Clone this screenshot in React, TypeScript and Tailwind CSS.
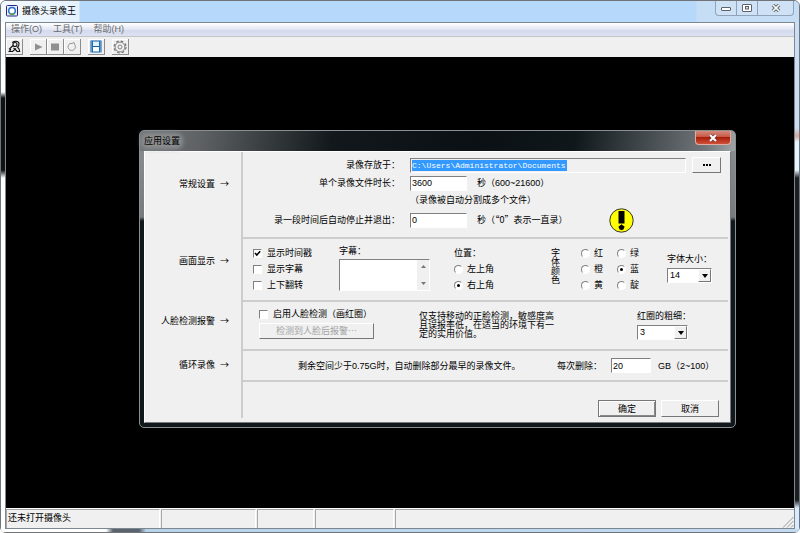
import type { ReactNode } from 'react';
import clsx from 'clsx';

const SUNKEN = 'border border-t-[#808080] border-l-[#808080] border-r-white border-b-white';
const RAISED = 'border border-t-white border-l-white border-r-[#777777] border-b-[#777777] bg-[#f0f0f0]';

const MENUS = ['操作(O)', '工具(T)', '帮助(H)'];

const COLOR_OPTIONS = [
  { label: '红' },
  { label: '绿' },
  { label: '橙' },
  { label: '蓝', checked: true },
  { label: '黄' },
  { label: '靛' },
];

function ToolButton({ label, children }: { label: string; children: ReactNode }) {
  return (
    <button
      type="button"
      aria-label={label}
      className="flex h-4 w-[17px] items-center justify-center border-r border-b border-[#8c8c8c] bg-[#f0f0f0] shadow-[inset_1px_1px_0_#ffffff]"
    >
      {children}
    </button>
  );
}

function Toolbar() {
  return (
    <div className="flex h-5 items-center bg-[#f0f0f0]">
      <ToolButton label="摄像头">
        <svg width="13" height="13" viewBox="0 0 13 13" fill="none" stroke="#111" strokeWidth="1.1">
          <path d="M4.500 3.200C5 .6 10.500.5 11 3.500c.2 1.800-.6 3-1.500 3.800 1.300.8 2 2 2.200 4.200H8.500" />
          <circle cx="7" cy="4.500" r="2" />
          <path d="M5 5.500 1.500 9l1.200.8L1.200 11.500h3.300L8 8.500M5.500 8l3.500 3" />
        </svg>
      </ToolButton>
      <div className="ml-[7px] flex">
        <ToolButton label="播放">
          <svg width="9" height="8" viewBox="0 0 9 8">
            <path d="M1 0.500v7l7.500-3.500z" fill="#8f8f8f" />
          </svg>
        </ToolButton>
        <ToolButton label="停止">
          <svg width="8" height="8" viewBox="0 0 8 8">
            <rect x="0" y="0.500" width="8" height="7" fill="#8f8f8f" />
          </svg>
        </ToolButton>
        <ToolButton label="录像">
          <svg width="10" height="11" viewBox="0 0 10 11" fill="none" stroke="#999" strokeWidth="1">
            <path d="M3 2.500h2.500l.5-1 1.500.5-.3 1A3.700 3.700 0 1 1 3 2.500z" />
          </svg>
        </ToolButton>
      </div>
      <div className="ml-[7px] flex gap-[7px]">
        <ToolButton label="录像文件">
          <svg width="12" height="13" viewBox="0 0 12 13">
            <rect x="0.500" y="0.500" width="11" height="12" fill="#0a5ea8" />
            <rect x="3" y="1.500" width="6" height="4.500" fill="#e2f2ff" />
            <rect x="3" y="7" width="6" height="4.500" fill="#fff" />
            <path d="M1.700 1.500v11M10.300 1.500v11" stroke="#d7ecff" strokeDasharray="1 1" />
          </svg>
        </ToolButton>
        <ToolButton label="设置">
          <svg width="14" height="14" viewBox="0 0 14 14" fill="none" stroke="#777">
            <circle cx="7" cy="7" r="6" strokeWidth="1.200" strokeDasharray="2.700 2.010" />
            <circle cx="7" cy="7" r="4.900" strokeWidth="0.900" />
            <circle cx="7" cy="7" r="2" strokeWidth="0.900" />
          </svg>
        </ToolButton>
      </div>
    </div>
  );
}

function WindowControls() {
  return (
    <div className="flex h-[15px] rounded-b-[4px] border border-t-0 border-[#8fa3ba] bg-[#cfe1f4]">
      <button type="button" aria-label="最小化" className="flex w-[21px] items-center justify-center border-r border-[#8fa3ba]">
        <svg width="10" height="5" viewBox="0 0 10 5">
          <rect x="0.500" y="1.500" width="9" height="3" rx="0.500" fill="#fff" stroke="#5c636e" />
        </svg>
      </button>
      <button type="button" aria-label="最大化" className="flex w-[21px] items-center justify-center border-r border-[#8fa3ba]">
        <svg width="10" height="8" viewBox="0 0 10 8">
          <rect x="0.500" y="0.500" width="9" height="7" rx="0.500" fill="#fff" stroke="#5c636e" />
          <rect x="3.500" y="2.500" width="3" height="2.500" fill="#cfe1f4" stroke="#5c636e" />
        </svg>
      </button>
      <button type="button" aria-label="关闭" className="flex w-[35px] items-center justify-center">
        <svg width="10" height="8" viewBox="0 0 10 8">
          <path d="M2 1l6 6M8 1L2 7" stroke="#5c636e" strokeWidth="3.400" />
          <path d="M2 1l6 6M8 1L2 7" stroke="#fff" strokeWidth="1.600" />
        </svg>
      </button>
    </div>
  );
}

function Check({ label, checked }: { label: string; checked?: boolean }) {
  return (
    <label className="flex h-4 items-center gap-[5px] whitespace-nowrap">
      <span className="relative flex">
        <input type="checkbox" defaultChecked={checked} className={clsx('peer size-[9px] appearance-none bg-white', SUNKEN)} />
        <svg className="pointer-events-none absolute inset-0 hidden peer-checked:block" width="9" height="9" viewBox="0 0 9 9">
          <path d="M2 4l1.800 2L7.200 2.300" fill="none" stroke="#000" strokeWidth="1.600" />
        </svg>
      </span>
      {label}
    </label>
  );
}

function Option({ name, label, checked }: { name: string; label: string; checked?: boolean }) {
  return (
    <label className="flex h-4 items-center gap-1 whitespace-nowrap">
      <span className="relative flex">
        <input
          type="radio"
          name={name}
          defaultChecked={checked}
          className={clsx('peer size-[9px] appearance-none rounded-full bg-white', SUNKEN)}
        />
        <span className="pointer-events-none absolute inset-[3px] hidden rounded-full bg-black peer-checked:block" />
      </span>
      {label}
    </label>
  );
}

function Dropdown({ id, label, value, width }: { id: string; label: string; value: string; width: string }) {
  return (
    <div className="flex flex-col items-start gap-[3px]">
      <label htmlFor={id} className="whitespace-nowrap leading-3">
        {label}
      </label>
      <div className={clsx('relative h-[15px] bg-white', SUNKEN, width)}>
        <select id={id} defaultValue={value} className="block h-[13px] w-full appearance-none bg-white pl-0.5 text-[9px] leading-[13px] text-black">
          <option>{value}</option>
        </select>
        <span className={clsx('pointer-events-none absolute top-0 right-0 flex h-[13px] w-[13px] items-center justify-center', RAISED)}>
          <svg width="6" height="4" viewBox="0 0 6 4">
            <path d="M0 0h6L3 4z" fill="#000" />
          </svg>
        </span>
      </div>
    </div>
  );
}

function TextField({ id, value, width }: { id: string; value: string; width: string }) {
  return <input id={id} type="text" defaultValue={value} className={clsx('h-[15px] bg-white pl-px text-[9px] leading-3', SUNKEN, width)} />;
}

function Section({ title, titlePad, className, children }: { title: string; titlePad: string; className: string; children: ReactNode }) {
  return (
    <section className="flex">
      <div className={clsx('flex w-[98px] shrink-0 items-start justify-end gap-[5px] border-r-2 border-[#cdcdcd] pr-3 leading-3', titlePad)}>
        <h2>{title}</h2>
        <span className="font-['Noto_Sans_CJK_SC',sans-serif]">→</span>
      </div>
      <div className={clsx('mr-0.5 min-w-0 flex-1 border-b-2 border-[#cdcdcd]', className)}>{children}</div>
    </section>
  );
}

function SettingsDialog() {
  return (
    <div
      role="dialog"
      aria-label="应用设置"
      className="absolute top-[73px] left-[133px] w-[597px] rounded-[5px] border border-[#8a8f92] bg-[linear-gradient(to_bottom,#8d9092_0,#777b7e_86px,#10181c_90px)] p-1 pt-0 text-black"
    >
      <header className="-mx-1 flex h-5 items-start justify-between rounded-t-[4px] bg-[linear-gradient(100deg,#73777a_0,#5e6265_60px,#12181b_190px,#0a1013_330px,#10171a_430px,#70767a_560px,#a0a4a6_100%)] pr-1 pl-1">
        <h1 className="pt-[3px] leading-[14px] text-black">
          <span className="rounded-sm bg-[#8b8d8e] shadow-[0_0_4px_3px_#8b8d8e]">应用设置</span>
        </h1>
        <button
          type="button"
          aria-label="关闭对话框"
          className="flex h-[14px] w-9 items-center justify-center rounded-b-[4px] border border-t-0 border-[#e3aaa0] bg-[linear-gradient(to_bottom,#d58a7c_0,#c65845_45%,#a91f0b_50%,#cf5038_100%)]"
        >
          <svg width="10" height="8" viewBox="0 0 10 8">
            <path d="M2 1l6 6M8 1L2 7" stroke="#6b3a35" strokeWidth="3.200" />
            <path d="M2 1l6 6M8 1L2 7" stroke="#fff" strokeWidth="2" />
          </svg>
        </button>
      </header>

      <div className="border border-[#777b7e] border-t-white border-l-white bg-[#f0f0f0]">
        <Section title="常规设置" titlePad="pt-[26px]" className="pt-[5px] pb-[9px]">
          <div className="flex h-4 items-center">
            <label htmlFor="path" className="w-[157px] text-right">
              录像存放于：
            </label>
            <div className={clsx('ml-[10px] flex h-[15px] w-[276px] items-center pl-px', SUNKEN)}>
              <input
                id="path"
                readOnly
                value="C:\Users\Administrator\Documents"
                className="h-[11px] w-[155px] bg-[#3399ff] font-['Liberation_Mono',monospace] text-[8px] leading-[11px] text-white"
              />
            </div>
            <button type="button" aria-label="浏览" className={clsx('ml-1.5 flex h-4 w-[29px] items-center justify-center gap-px', RAISED)}>
              <span className="size-0.5 bg-black" />
              <span className="size-0.5 bg-black" />
              <span className="size-0.5 bg-black" />
            </button>
          </div>
          <div className="mt-0.5 flex h-4 items-center">
            <label htmlFor="duration" className="mr-[10px] w-[157px] text-right">
              单个录像文件时长：
            </label>
            <TextField id="duration" value="3600" width="w-[57px]" />
            <span className="ml-[10px]">秒（600~21600）</span>
          </div>
          <p className="mt-px ml-[167px] h-4 leading-4">（录像被自动分割成多个文件）</p>
          <div className="mt-1 flex h-4 items-center">
            <label htmlFor="stop" className="mr-[10px] w-[157px] text-right">
              录一段时间后自动停止并退出：
            </label>
            <TextField id="stop" value="0" width="w-[57px]" />
            <span className="ml-[10px] w-[132px] font-['Noto_Sans_CJK_SC',sans-serif]">秒（“0”表示一直录）</span>
            <svg className="shrink-0" width="25" height="25" viewBox="0 0 25 25">
              <circle cx="12.500" cy="12.500" r="11.700" fill="#ffff00" stroke="#333" strokeWidth="1" />
              <path d="M9.500 3h6v12.500h-6z" fill="#000" />
              <path d="M12.500 16l1 1.500 2.500 1.500-2.500 1.500-1 2-1-2L9 19l2.500-1.500z" fill="#000" />
              <circle cx="12.500" cy="19.500" r="2.500" fill="#000" />
            </svg>
          </div>
        </Section>

        <Section title="画面显示" titlePad="pt-[16px]" className="flex h-[63px] items-start pt-1.5 pl-[10px]">
          <div className="flex w-[86px] flex-col">
            <Check label="显示时间戳" checked />
            <Check label="显示字幕" />
            <Check label="上下翻转" />
          </div>
          <div className="flex w-[115px] flex-col">
            <label htmlFor="subtitle" className="leading-3">
              字幕：
            </label>
            <div className={clsx('mt-0.5 flex h-8 w-[91px] bg-white', SUNKEN)}>
              <textarea id="subtitle" className="min-w-0 flex-1 resize-none overflow-hidden bg-white p-0.5 text-[9px]" />
              <div className="flex w-3 flex-col items-center justify-between bg-[#f0f0f0] py-[5px]">
                <svg width="5" height="3" viewBox="0 0 5 3">
                  <path d="M0 3h5L2.500 0z" fill="#777" />
                </svg>
                <svg width="5" height="3" viewBox="0 0 5 3">
                  <path d="M0 0h5L2.500 3z" fill="#777" />
                </svg>
              </div>
            </div>
          </div>
          <fieldset className="w-[97px]">
            <legend className="h-4 leading-4">位置：</legend>
            <Option name="position" label="左上角" />
            <Option name="position" label="右上角" checked />
          </fieldset>
          <div role="radiogroup" aria-label="字体颜色" className="flex w-[116px] items-start gap-5">
            <span className="w-[10px] pt-1 leading-[9px] break-all">字体颜色</span>
            <div className="grid grid-cols-[36px_36px]">
              {COLOR_OPTIONS.map((c) => (
                <Option key={c.label} name="color" label={c.label} checked={c.checked} />
              ))}
            </div>
          </div>
          <div className="pt-2">
            <Dropdown id="font-size" label="字体大小：" value="14" width="w-[45px]" />
          </div>
        </Section>

        <Section title="人脸检测报警" titlePad="pt-[13px]" className="flex h-[49px] items-start pt-1 pl-4">
          <div className="flex w-[160px] flex-col items-start">
            <Check label="启用人脸检测（画红圈）" />
            <button
              type="button"
              disabled
              className={clsx("mt-px h-4 w-[115px] font-['Noto_Sans_CJK_SC',sans-serif] leading-3 text-[#a3a3a3]", RAISED)}
            >
              检测到人脸后报警⋯
            </button>
          </div>
          <p className="mr-20 w-[138px] pt-1.5 leading-[9px]">仅支持移动的正脸检测，敏感度高且误报率低，在适当的环境下有一定的实用价值。</p>
          <div className="pt-1">
            <Dropdown id="thickness" label="红圈的粗细：" value="3" width="w-[51px]" />
          </div>
        </Section>

        <Section title="循环录像" titlePad="pt-[8px]" className="flex h-[31px] items-center">
          <p className="ml-[55px] w-[259px] whitespace-nowrap">剩余空间少于0.75G时，自动删除部分最早的录像文件。</p>
          <label htmlFor="delete-size" className="w-[54px]">
            每次删除：
          </label>
          <TextField id="delete-size" value="20" width="w-[40px]" />
          <span className="ml-[7px] whitespace-nowrap">GB（2~100）</span>
        </Section>

        <footer className="flex h-10">
          <div className="h-9 w-[98px] border-r-2 border-[#cdcdcd]" />
          <div className="flex flex-1 items-start justify-end gap-[5px] pt-[18px] pr-[11px]">
            <button type="button" className="h-[17px] w-[58px] border border-[#777777] bg-[#f0f0f0] shadow-[inset_1px_1px_0_#ffffff,inset_-1px_-1px_0_#888888]">
              确定
            </button>
            <button type="button" className={clsx('h-[17px] w-[58px]', RAISED)}>
              取消
            </button>
          </div>
        </footer>
      </div>
    </div>
  );
}

function StatusBar() {
  const panel = 'border-t border-l border-r border-[#a8a8a8] border-r-white mr-px';
  return (
    <footer className="flex h-5 border-t border-white bg-[#f0f0f0] text-black">
      <div className={clsx('w-[154px] pl-px leading-[17px]', panel)}>还未打开摄像头</div>
      <div className={clsx('w-[95px]', panel)} />
      <div className={clsx('w-[57px]', panel)} />
      <div className={clsx('w-[79px]', panel)} />
      <div className="flex flex-1 items-end justify-end border-t border-l border-[#a8a8a8]">
        <svg width="12" height="12" viewBox="0 0 12 12" stroke="#999">
          <path d="M1 11.500L11.500 1M5 11.500L11.500 5M9 11.500L11.500 9" />
        </svg>
      </div>
    </footer>
  );
}

export default function App() {
  return (
    <div className="flex min-h-screen flex-col rounded-[6px] border border-[#707478] bg-[#c9dff5] font-['Liberation_Sans','Noto_Sans_CJK_SC',sans-serif] text-[9px] leading-3">
      <header className="flex h-[21px] items-start justify-between rounded-t-[5px] bg-[linear-gradient(to_right,#f4faff_0,#e4f1fd_78px,#b6d9fb_79px,#b6d9fb_695px,#c6def5_696px)] pr-[5px] pl-[5px]">
        <h1 className="flex items-center gap-1 pt-[3px] leading-[14px] text-black">
          <svg width="12" height="12" viewBox="0 0 12 12">
            <rect x="0.500" y="0.500" width="11" height="10.500" rx="1" fill="#eef" stroke="#25258c" />
            <circle cx="6" cy="5.800" r="3.300" fill="#fff" stroke="#2a6fd0" strokeWidth="1.500" />
            <path d="M3.500 8.300a3.300 3.300 0 0 0 5 0" fill="none" stroke="#5aa83a" strokeWidth="1.500" />
          </svg>
          摄像头录像王
        </h1>
        <WindowControls />
      </header>

      <div className="flex flex-1">
        <div className="w-1 shrink-0 bg-[linear-gradient(to_bottom,#ffffff_70px,#111111_76px,#111111_148px,#ffffff_156px)]" />
        <div className="flex min-w-0 flex-1 flex-col border border-[#7d8790]">
          <nav className="flex h-[14px] gap-[11px] border-b border-[#c4c4c8] bg-[linear-gradient(to_bottom,#ffffff_0,#e2e6f3_50%,#d4daed_55%,#dde2f2_100%)] pl-[5px] text-[#6b6b6b]">
            {MENUS.map((m) => (
              <button key={m} type="button" className="leading-[13px]">
                {m}
              </button>
            ))}
          </nav>
          <Toolbar />
          <main className="relative min-h-[450px] flex-1 bg-black">
            <SettingsDialog />
          </main>
          <StatusBar />
        </div>
        <div className="w-1 shrink-0 bg-[linear-gradient(to_bottom,#c9dff5_106px,#d9a59f_114px,#e4f6ff_120px,#e4f6ff_148px,#1b1f22_156px,#1b1f22_478px,#d5ebff_486px)]" />
      </div>
      <div className="h-[3px] rounded-b-[5px] bg-[linear-gradient(to_right,#ffffff_105px,#59646e_112px,#59646e_138px,#b9d3ea_145px,#c2dbf2_100%)]" />
    </div>
  );
}
